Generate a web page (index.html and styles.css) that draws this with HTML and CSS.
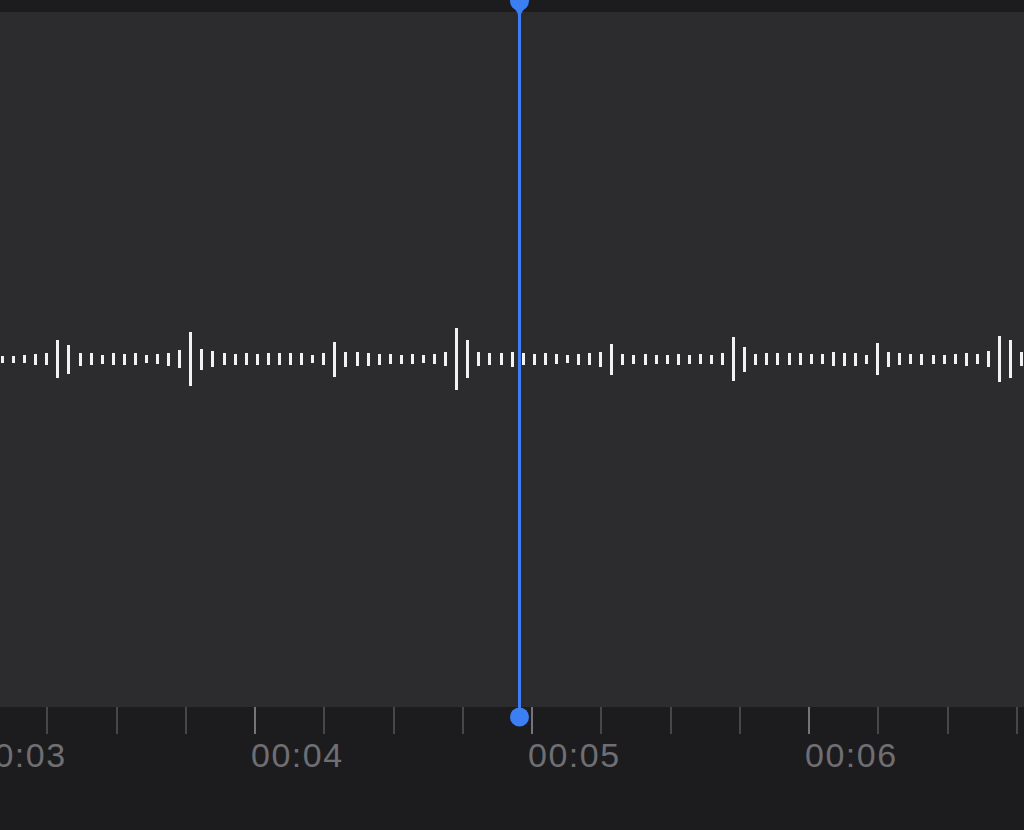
FILE: index.html
```html
<!DOCTYPE html>
<html>
<head>
    <title>Waveform</title>
    <link rel="stylesheet" href="styles.css">
</head>

<body>
    <div id="editor">
        <div class="topBar"></div>

        <div class="track" id="track">
        </div>

        <div class="ruler">
            <div class="rulerStrip">
                <div class="second">
                    <div class="ticks"><span class="tick major"></span><span class="tick"></span><span class="tick"></span><span class="tick"></span></div>
                    <div class="label">00:03</div>
                </div>
                <div class="second">
                    <div class="ticks"><span class="tick major"></span><span class="tick"></span><span class="tick"></span><span class="tick"></span></div>
                    <div class="label">00:04</div>
                </div>
                <div class="second">
                    <div class="ticks"><span class="tick major"></span><span class="tick"></span><span class="tick"></span><span class="tick"></span></div>
                    <div class="label">00:05</div>
                </div>
                <div class="second">
                    <div class="ticks"><span class="tick major"></span><span class="tick"></span><span class="tick"></span><span class="tick"></span></div>
                    <div class="label">00:06</div>
                </div>
            </div>
        </div>

        <!-- playhead sits over the track and the ruler -->
        <svg class="playhead" width="23" height="730" viewBox="0 0 23 730">
            <circle cx="11.5" cy="1" r="9.5" fill="#3b7ff2"/>
            <path d="M4 7 Q10 11 10 16 L13 16 Q13 11 19 7 Z" fill="#3b7ff2"/>
            <rect x="10" y="10" width="3" height="708" fill="#3b7ff2"/>
            <circle cx="11.5" cy="717" r="9.5" fill="#3b7ff2"/>
        </svg>
    </div>

    <script>
        // bar heights read off the recording, left to right
        let heights = [
            7,7,8,11,12,38,29,13,12,9,12,11,12,8,10,13,18,54,21,16,12,11,12,11,12,12,12,12,8,12,35,
            15,14,13,11,10,9,10,8,10,14,62,38,14,12,12,15,12,11,12,10,8,11,12,15,31,11,9,11,9,9,11,
            9,10,9,12,44,25,11,12,12,12,12,10,10,14,13,13,9,32,15,12,10,11,9,9,10,13,10,16,46,38,14
        ];

        let track = document.querySelector("#track");
        for (let h of heights) {
            let bar = document.createElement("span");
            bar.className = "bar";
            bar.style.height = h + "px";
            track.appendChild(bar);
        }
    </script>
</body>

</html>
```

FILE: styles.css
```css
body {
    margin: 0;
    background-color: #1c1c1e;
    font-family: "Liberation Sans", Arial, sans-serif;
}

#editor {
    position: relative;
    width: 1024px;
    height: 830px;
    overflow: hidden;
}

.topBar {
    height: 12px;
    background-color: #1c1c1e;
}

.track {
    height: 695px;
    background-color: #2c2c2e;
    display: flex;
    align-items: center;
    justify-content: space-between;
    padding: 0 0 1px 1px;
    box-sizing: border-box;
}

.bar {
    width: 3px;
    background-color: #f2f2f2;
    flex-shrink: 0;
}

.ruler {
    height: 123px;
    background-color: #1c1c1e;
    overflow: hidden;
}

.rulerStrip {
    display: flex;
    margin-left: -23px;
}

.second {
    width: 277px;
    flex-shrink: 0;
}

.ticks {
    display: grid;
    grid-template-columns: repeat(4, 1fr);
    height: 27px;
}

.tick {
    width: 2px;
    height: 27px;
    background-color: #47474b;
}

.tick.major {
    background-color: #747479;
}

.label {
    margin-top: 4px;
    margin-left: -3px;
    font-size: 34px;
    line-height: 34px;
    letter-spacing: 1.5px;
    color: #6f6f73;
}

.playhead {
    position: absolute;
    left: 508px;
    top: 0;
}
```
